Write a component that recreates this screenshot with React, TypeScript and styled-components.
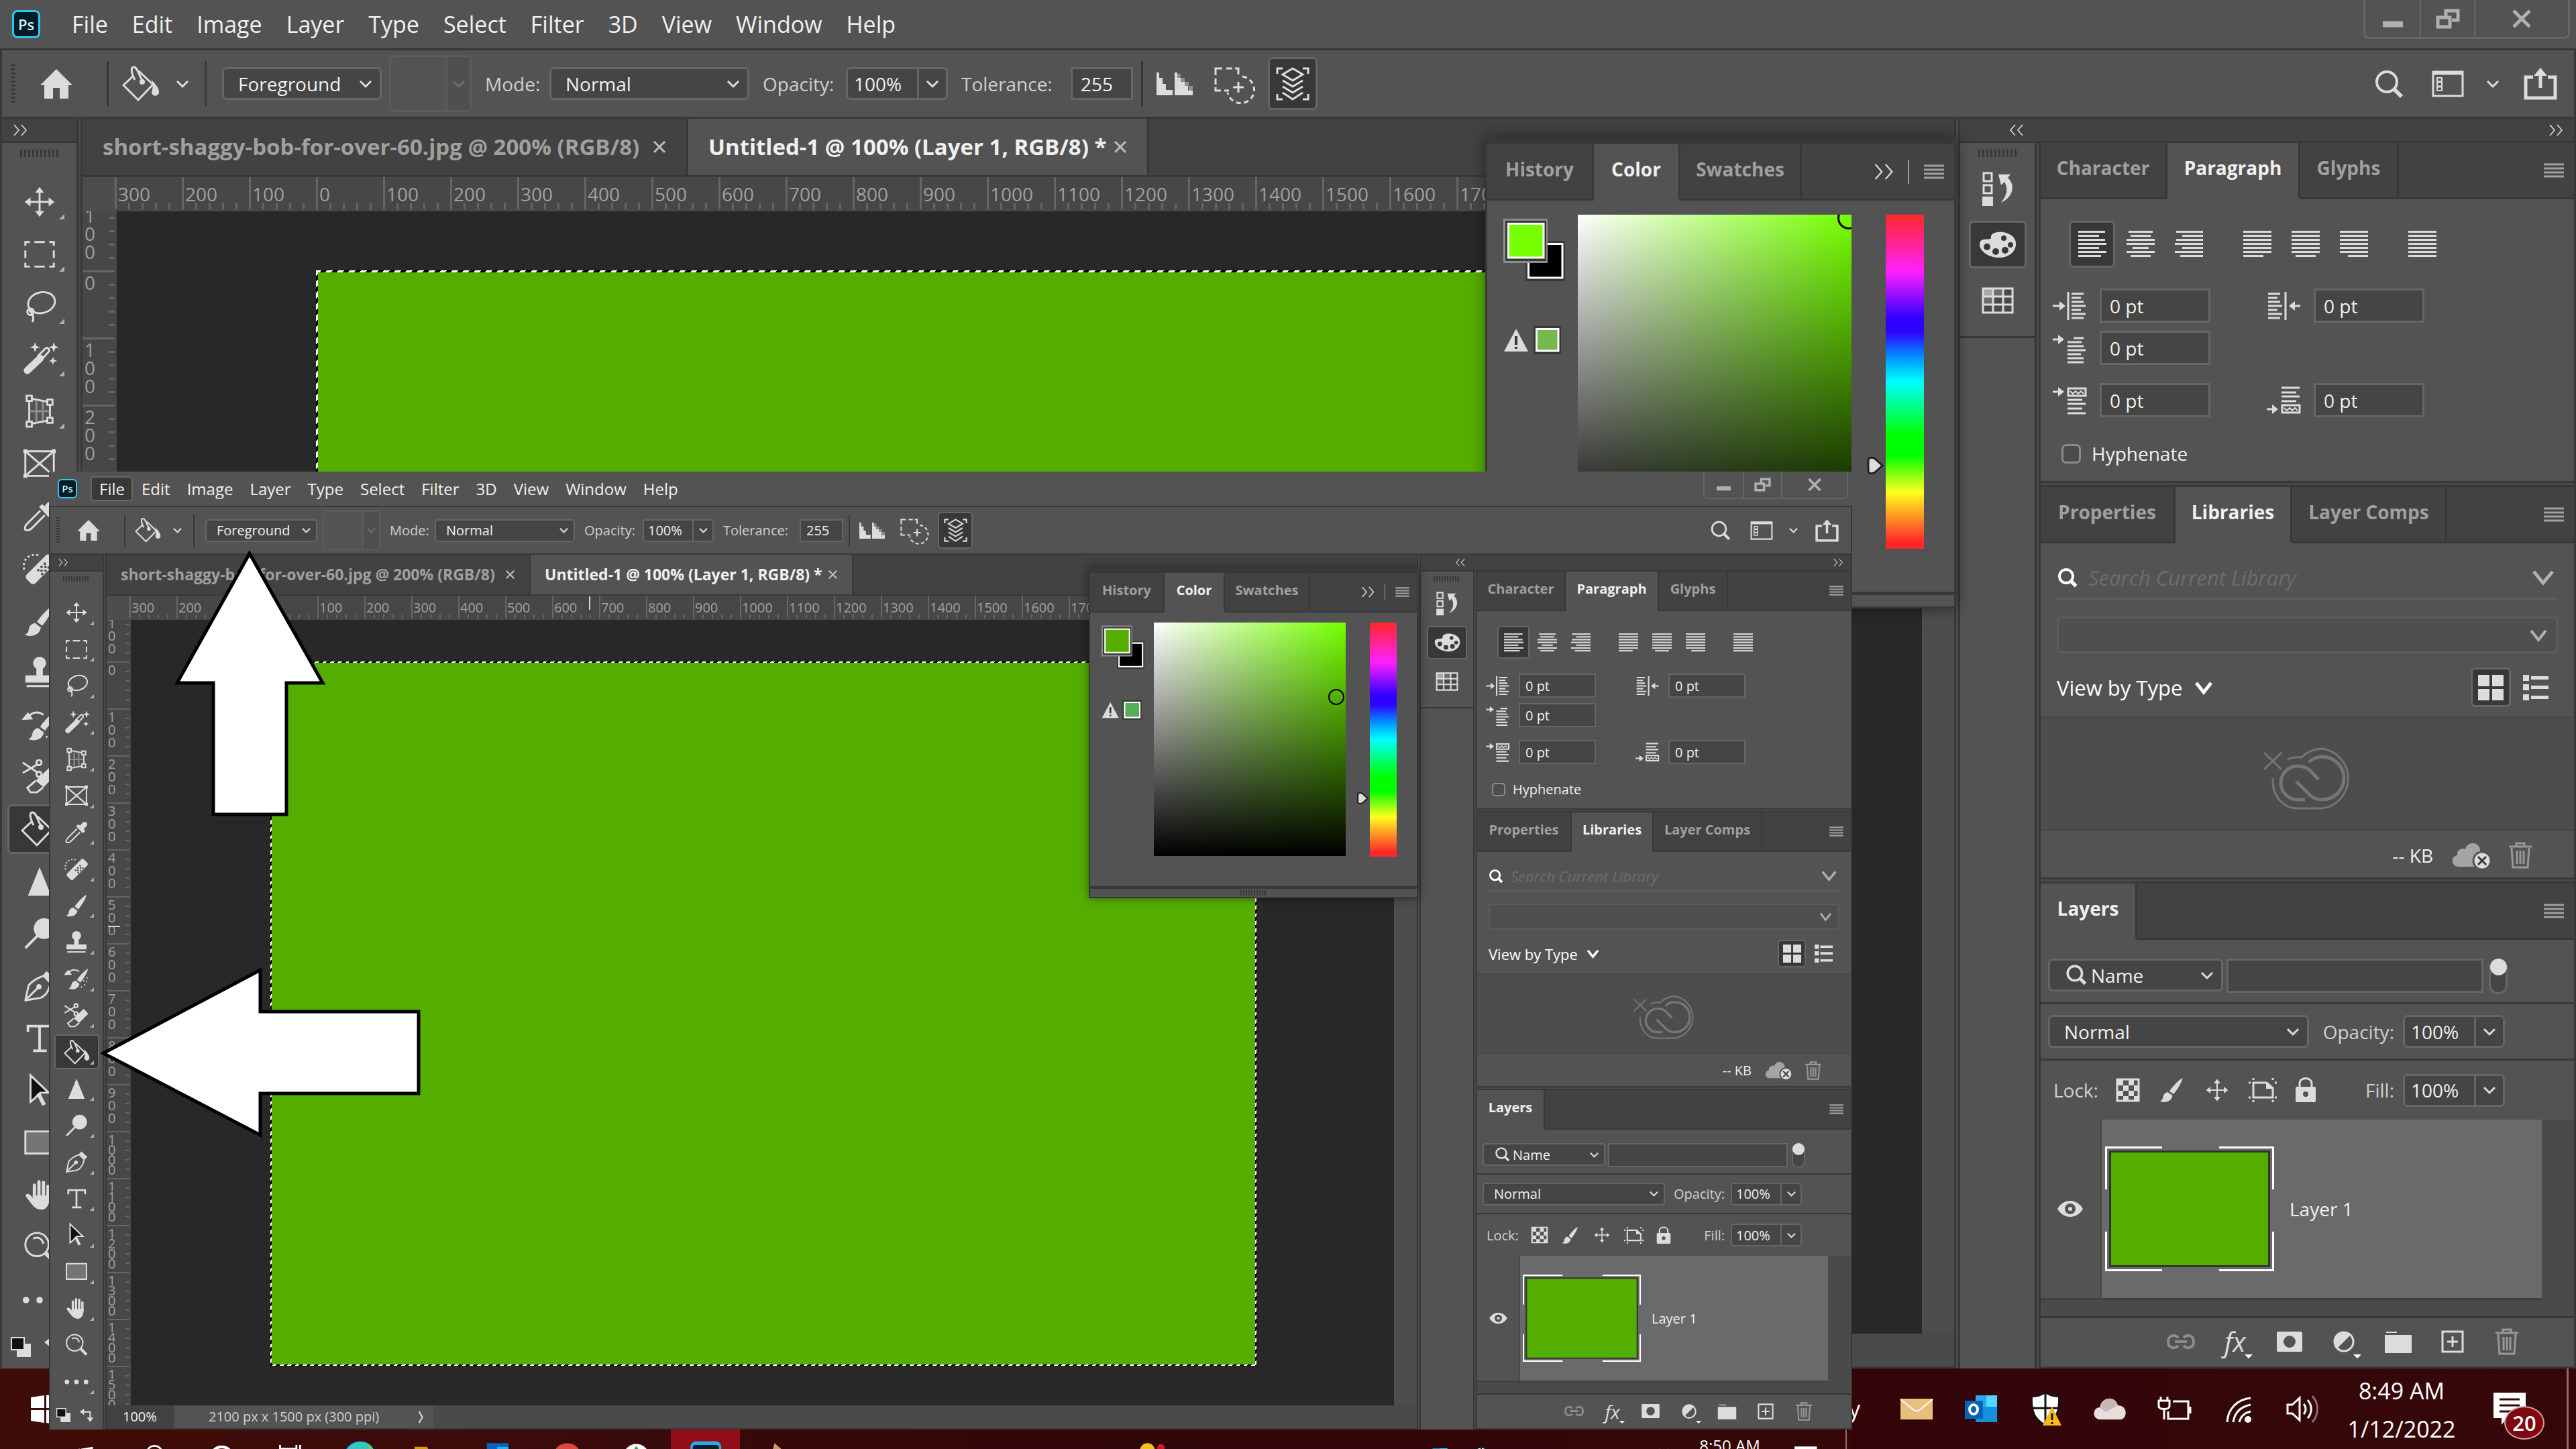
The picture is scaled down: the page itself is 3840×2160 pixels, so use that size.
import React from 'react';
import styled, { createGlobalStyle, css, DefaultTheme, ThemeProvider } from 'styled-components';

declare module 'styled-components' {
  export interface DefaultTheme {
    scale: number;
  }
}

type Themed = { theme: DefaultTheme };

/* Every length is written at 100% and follows the scale of its desktop; hairlines never vanish. */
const toPx = (n: number, p: Themed) => {
  const v = Math.round(n * p.theme.scale);
  return `${n > 0 ? Math.max(1, v) : v}px`;
};
const u = (n: number) => (p: Themed) => toPx(n, p);

const c = {
  panel: '#535353',
  header: '#424242',
  field: '#454545',
  line: '#383838',
  edge: '#666666',
  strip: '#4a4a4a',
  canvas: '#282828',
  icon: '#dcdcdc',
  dim: '#a0a0a0',
  text: '#f0f0f0',
  label: '#cfcfcf',
  green: '#54ae00',
};

const Global = createGlobalStyle`
  *, *::before, *::after { box-sizing: border-box; }
  html, body { margin: 0; padding: 0; background: #350709; }
  body, button, input, select { font-family: "Open Sans", "Noto Sans", sans-serif; }
  button, input, select { margin: 0; padding: 0; border: 0; border-radius: 0; outline: 0; background: none; color: inherit; }
`;

/* ---------- drawings ---------- */

const Svg = styled.svg<{ $w: number; $h: number }>`
  display: block;
  flex: none;
  width: ${p => toPx(p.$w, p)};
  height: ${p => toPx(p.$h, p)};
  overflow: visible;
`;

type DrawingProps = { w: number; h: number; vw?: number; vh?: number; children: React.ReactNode };
const Drawing = ({ w, h, vw = w, vh = h, children }: DrawingProps) => (
  <Svg $w={w} $h={h} viewBox={`0 0 ${vw} ${vh}`} fill="none" aria-hidden="true">
    {children}
  </Svg>
);

const Chevron = ({ w = 18, h = 10, color = c.icon, weight = 3 }: { w?: number; h?: number; color?: string; weight?: number }) => (
  <Drawing w={w} h={h}>
    <path d={`M1 1 L${w / 2} ${h - 1} L${w - 1} 1`} stroke={color} strokeWidth={weight} />
  </Drawing>
);

const DoubleChevron = ({ w = 20, h = 16, left = false }: { w?: number; h?: number; left?: boolean }) => (
  <Drawing w={w} h={h} vw={20} vh={16}>
    <path
      d={left ? 'M8 0 L1 8 L8 16 M19 0 L12 8 L19 16' : 'M1 0 L8 8 L1 16 M12 0 L19 8 L12 16'}
      stroke={c.icon}
      strokeWidth="1.6"
    />
  </Drawing>
);

const Burger = () => (
  <Drawing w={30} h={22}>
    <path d="M0 2 H30 M0 8 H30 M0 14 H30 M0 20 H30" stroke={c.dim} strokeWidth="3" />
  </Drawing>
);

const Bucket = ({ size = 56 }: { size?: number }) => (
  <Drawing w={size} h={size} vw={56} vh={56}>
    <path d="M17 16 L2 30 L24 52 L46 29 L25 9" stroke={c.icon} strokeWidth="3" strokeLinejoin="round" />
    <path d="M19 22 C13 10 13 4 17 3 C22 2 24 12 30 23" stroke={c.icon} strokeWidth="3" />
    <circle cx="30" cy="25" r="4" fill={c.icon} />
    <path d="M43 21 C48 26 56 35 55 41 C54 48 44 47 44 40 C46 34 47 28 43 21 Z" fill={c.icon} />
  </Drawing>
);

const Magnifier = ({ size, color = c.icon, weight = 4 }: { size: number; color?: string; weight?: number }) => (
  <Drawing w={size} h={size} vw={42} vh={42}>
    <circle cx="18" cy="18" r="15" stroke={color} strokeWidth={weight} />
    <path d="M28 28 L40 40" stroke={color} strokeWidth={weight + 2} />
  </Drawing>
);

const BrushShape = () => (
  <>
    <path d="M50 4 C42 8 30 21 24 30 L32 36 C39 28 48 14 50 4 Z" fill={c.icon} />
    <path d="M21 32 C14 33 12 38 11 43 C10 48 7 49 5 50 C13 54 28 52 30 39 Z" fill={c.icon} />
  </>
);

const I = c.icon;
const tools: Record<string, React.ReactNode> = {
  move: (
    <>
      <path d="M28 10 V46 M10 28 H46" stroke={I} strokeWidth="3" />
      <path d="M28 5 l7 9 h-14 z M28 51 l7 -9 h-14 z M5 28 l9 -7 v14 z M51 28 l-9 -7 v14 z" fill={I} />
    </>
  ),
  marquee: (
    <path
      d="M6 15 V9 H13 M20 9 H36 M43 9 H50 V15 M50 22 V34 M50 41 V47 H43 M36 47 H20 M13 47 H6 V41 M6 34 V22"
      stroke={I}
      strokeWidth="3"
    />
  ),
  lasso: (
    <>
      <ellipse cx="31" cy="22" rx="21" ry="16" transform="rotate(-14 31 22)" stroke={I} strokeWidth="3" />
      <circle cx="14" cy="36" r="5" stroke={I} strokeWidth="3" />
      <path d="M11 33 C17 38 20 45 17 52" stroke={I} strokeWidth="3" />
    </>
  ),
  wand: (
    <>
      <path d="M9 46 L29 27" stroke={I} strokeWidth="11" strokeLinecap="round" />
      <path d="M25 24 L37 12 C40 9 45 14 42 17 L31 29" stroke={I} strokeWidth="3" />
      <path d="M21 2 l2 6 6 2 -6 2 -2 6 -2 -6 -6 -2 6 -2 z M50 2 l2 6 6 2 -6 2 -2 6 -2 -6 -6 -2 6 -2 z M49 25 l1 4 5 2 -5 2 -1 4 -2 -4 -4 -2 4 -2 z" fill={I} />
    </>
  ),
  warp: (
    <>
      <path d="M12 8 L44 14 V42 L12 48 Z" stroke={I} strokeWidth="3" />
      <path d="M23 11 V45 M33 13 V43 M13 28 H43" stroke="#8e8e8e" strokeWidth="3" />
      <path d="M8 4 h8 v8 h-8 z M40 10 h8 v8 h-8 z M40 38 h8 v8 h-8 z M8 44 h8 v8 h-8 z" fill={c.panel} stroke={I} strokeWidth="3" />
    </>
  ),
  frame: (
    <>
      <path d="M6 9 H50 V47 H6 Z M6 9 L50 47 M50 9 L6 47" stroke={I} strokeWidth="3" />
      <path d="M3 6 h6 v6 h-6 z M47 6 h6 v6 h-6 z M47 44 h6 v6 h-6 z M3 44 h6 v6 h-6 z" fill={I} />
    </>
  ),
  dropper: (
    <>
      <path d="M29 20 L9 40 C4 45 4 51 9 50 C12 51 15 48 17 46 L36 27" stroke={I} strokeWidth="3" />
      <path d="M27 14 L32 10 L36 13 C40 6 46 3 50 6 C54 10 50 16 44 20 L47 25 L42 30 Z" fill={I} />
    </>
  ),
  heal: (
    <>
      <rect x="4" y="20" width="52" height="19" rx="5" transform="rotate(-45 30 30)" fill={I} />
      <path d="M26 31 h.1 M32 37 h.1 M31 26 h.1 M37 32 h.1 M36 21 h.1 M42 27 h.1 M31 32 h.1 M37 26 h.1" stroke={c.panel} strokeWidth="4" strokeLinecap="round" />
      <path d="M4 30 C1 14 12 5 26 8" stroke={I} strokeWidth="3" strokeDasharray="3 4" />
    </>
  ),
  brush: <BrushShape />,
  stamp: (
    <>
      <circle cx="28" cy="13" r="10" fill={I} />
      <path d="M23 20 H33 V32 H23 Z M6 32 H50 V43 H6 Z M8 47 H48 V50 H8 Z" fill={I} />
    </>
  ),
  history: (
    <>
      <g transform="translate(6 2) scale(.95)">
        <BrushShape />
      </g>
      <path d="M34 12 C26 6 16 8 12 14" stroke={I} strokeWidth="3" />
      <path d="M0 20 L10 8 L18 19 Z" fill={I} />
      <path d="M52 26 v.1 M50 34 v.1 M46 41 v.1 M39 46 v.1 M44 32 v.1" stroke={I} strokeWidth="3" strokeLinecap="round" />
    </>
  ),
  eraser: (
    <>
      <path d="M22 34 L44 13 L54 24 L34 44 Z" fill={I} />
      <path d="M22 34 L9 45 L14 52 H24 L34 44" stroke={I} strokeWidth="3" />
      <path d="M2 6 L26 22 M2 22 L26 8" stroke={I} strokeWidth="3" />
      <circle cx="27" cy="6" r="4" stroke={I} strokeWidth="3" />
      <circle cx="27" cy="24" r="4" stroke={I} strokeWidth="3" />
    </>
  ),
  triangle: <path d="M28 6 L46 50 H10 Z" fill={I} />,
  dodge: (
    <>
      <circle cx="35" cy="20" r="16" fill={I} />
      <path d="M26 30 L6 50" stroke={I} strokeWidth="4" />
    </>
  ),
  pen: (
    <>
      <path d="M6 50 L11 27 C16 20 26 15 34 12 L45 23 C43 32 40 41 30 46 Z" stroke={I} strokeWidth="3" strokeLinejoin="round" />
      <path d="M8 48 L25 31" stroke={I} strokeWidth="3" />
      <circle cx="27" cy="29" r="4" fill={I} />
      <path d="M34 10 L39 5 L52 17 L46 23 Z" fill={I} />
    </>
  ),
  type: <path d="M10 18 V9 H47 V18 M28 9 V47 M18 47 H39" stroke={I} strokeWidth="4" />,
  pointer: (
    <>
      <path d="M14 4 L42 31 H29 L20 40 L14 45 Z" fill="#111" stroke={I} strokeWidth="3" />
      <path d="M26 32 L35 50" stroke={I} strokeWidth="6" />
    </>
  ),
  rect: <path d="M6 10 H50 V44 H6 Z" fill="#757575" stroke={I} strokeWidth="3" />,
  hand: (
    <>
      <path d="M20 12 V30 M27 7 V30 M34 8 V30 M41 14 V32" stroke={I} strokeWidth="5" strokeLinecap="round" />
      <path d="M17 28 H44 C44 40 40 50 31 50 C20 50 15 40 7 30 C5 26 10 24 13 27 L18 32 Z" fill={I} />
    </>
  ),
  zoom: (
    <>
      <circle cx="24" cy="23" r="18" stroke={I} strokeWidth="3" />
      <path d="M18 14 C26 10 32 14 34 22" stroke={I} strokeWidth="3" />
      <path d="M37 36 L50 49" stroke={I} strokeWidth="6" />
    </>
  ),
  more: (
    <>
      <circle cx="7" cy="28" r="5" fill={I} />
      <circle cx="28" cy="28" r="5" fill={I} />
      <circle cx="49" cy="28" r="5" fill={I} />
    </>
  ),
};
const toolOrder = [
  'move', 'marquee', 'lasso', 'wand', 'warp', 'frame', 'dropper', 'heal', 'brush', 'stamp', 'history',
  'eraser', 'bucket', 'triangle', 'dodge', 'pen', 'type', 'pointer', 'rect', 'hand', 'zoom', 'more',
];

const Trash = () => (
  <Drawing w={34} h={40}>
    <path d="M11 6 V2 H23 V6 M0 7 H34 M4 9 L6 38 H28 L30 9 M12 13 V33 M17 13 V33 M22 13 V33" stroke="#989898" strokeWidth="3" />
  </Drawing>
);

type Anchor = 'left' | 'center' | 'right';
const AlignIcon = ({ lens, anchor }: { lens: number[]; anchor: Anchor }) => (
  <Drawing w={42} h={40}>
    {lens.map((len, i) => {
      const x = anchor === 'left' ? 0 : anchor === 'right' ? 42 - len : (42 - len) / 2;
      return <rect key={i} x={x} y={i * 6} width={len} height="3" fill={c.icon} />;
    })}
  </Drawing>
);

const indentLines = 'M28 3 H46 M28 9 H42 M28 15 H46 M28 21 H49 M28 27 H42 M28 33 H49 M28 39 H46';
const indents: Record<string, React.ReactNode> = {
  'Indent left margin': (
    <>
      <path d={indentLines} stroke={I} strokeWidth="3" />
      <path d="M23 0 V42 M0 21 H12" stroke={I} strokeWidth="3" />
      <path d="M10 14 L19 21 L10 28 Z" fill={I} />
    </>
  ),
  'Indent right margin': (
    <>
      <g transform="translate(-26 0)">
        <path d={indentLines} stroke={I} strokeWidth="3" />
      </g>
      <path d="M28 0 V42 M40 21 H50" stroke={I} strokeWidth="3" />
      <path d="M42 14 L33 21 L42 28 Z" fill={I} />
    </>
  ),
  'Indent first line': (
    <>
      <path d="M31 6 H46 M22 12 H43 M22 18 H46 M22 24 H49 M22 30 H42 M22 36 H46 M22 42 H46" stroke={I} strokeWidth="3" />
      <path d="M0 8 H10" stroke={I} strokeWidth="3" />
      <path d="M8 1 L17 8 L8 15 Z" fill={I} />
    </>
  ),
  'Space before paragraph': (
    <>
      <path d="M23 3 H49 V14 H23 Z M22 20 H44 M22 26 H49 M22 33 H44 M22 40 H49" stroke={I} strokeWidth="3" />
      <path d="M26 7 l4 4 4 -4 4 4 4 -4 4 4" stroke={I} strokeWidth="2" />
      <path d="M0 8 H10" stroke={I} strokeWidth="3" />
      <path d="M8 1 L17 8 L8 15 Z" fill={I} />
    </>
  ),
  'Space after paragraph': (
    <>
      <path d="M23 28 H49 V39 H23 Z M22 2 H49 M22 9 H44 M22 15 H49 M22 22 H44" stroke={I} strokeWidth="3" />
      <path d="M26 32 l4 4 4 -4 4 4 4 -4 4 4" stroke={I} strokeWidth="2" />
      <path d="M0 34 H10" stroke={I} strokeWidth="3" />
      <path d="M8 27 L17 34 L8 41 Z" fill={I} />
    </>
  ),
};

/* ---------- shared controls ---------- */

const IconButton = styled.button<{ $w: number; $h: number; $active?: boolean }>`
  display: flex;
  flex: none;
  align-items: center;
  justify-content: center;
  width: ${p => toPx(p.$w, p)};
  height: ${p => toPx(p.$h, p)};
  border: ${u(3)} solid transparent;
  border-radius: ${u(7)};
  ${p => p.$active && css`
    background: ${c.line};
    border-color: ${c.edge};
  `}
`;

const SelectBox = styled.div<{ $w?: number; $h?: number; $tail?: number; $faint?: boolean }>`
  position: relative;
  display: flex;
  flex: none;
  align-items: center;
  justify-content: flex-end;
  width: ${p => (p.$w ? toPx(p.$w, p) : 'auto')};
  height: ${p => toPx(p.$h ?? 49, p)};
  padding-right: ${p => toPx(p.$tail ?? 12, p)};
  border: ${u(3)} solid ${p => (p.$faint ? '#5c5c5c' : c.edge)};
  border-radius: ${u(7)};
  background: ${p => (p.$faint ? '#4f4f4f' : c.field)};
`;

const NativeSelect = styled.select<{ $pad: number }>`
  position: absolute;
  inset: 0;
  width: 100%;
  appearance: none;
  padding-left: ${p => toPx(p.$pad, p)};
  color: ${c.text};
  font-size: ${u(28)};
`;

const Lens = styled.span`
  position: absolute;
  left: ${u(24)};
  top: ${u(6)};
`;

type PickProps = { label: string; value: string; w?: number; pad?: number; lens?: boolean };
const Pick = ({ label, value, w, pad = 21, lens }: PickProps) => (
  <SelectBox $w={w}>
    <NativeSelect $pad={pad} aria-label={label} defaultValue={value}>
      <option>{value}</option>
    </NativeSelect>
    {lens && (
      <Lens>
        <Magnifier size={30} weight={5} />
      </Lens>
    )}
    <Chevron />
  </SelectBox>
);

const ComboBox = styled.div<{ $w: number; $h?: number; $faint?: boolean }>`
  display: flex;
  flex: none;
  width: ${p => toPx(p.$w, p)};
  height: ${p => toPx(p.$h ?? 49, p)};
  border: ${u(3)} solid ${p => (p.$faint ? '#5c5c5c' : c.edge)};
  border-radius: ${u(7)};
  background: ${p => (p.$faint ? 'transparent' : c.field)};
`;

const ComboInput = styled.input`
  flex: 1;
  min-width: 0;
  padding-left: ${u(9)};
  color: ${c.text};
  font-size: ${u(28)};
`;

const ComboArrow = styled.button<{ $w?: number; $faint?: boolean }>`
  display: flex;
  align-items: center;
  justify-content: center;
  width: ${p => toPx(p.$w ?? 43, p)};
  border-left: ${u(3)} solid ${p => (p.$faint ? '#5c5c5c' : c.edge)};
  background: ${p => (p.$faint ? '#4f4f4f' : 'none')};
`;

const Combo = ({ id, value }: { id: string; value: string }) => (
  <ComboBox $w={152}>
    <ComboInput id={id} defaultValue={value} />
    <ComboArrow aria-label="Open slider">
      <Chevron />
    </ComboArrow>
  </ComboBox>
);

const TextBox = styled.input<{ $w: number; $h?: number }>`
  flex: none;
  width: ${p => toPx(p.$w, p)};
  height: ${p => toPx(p.$h ?? 51, p)};
  padding-left: ${u(12)};
  border: ${u(3)} solid ${c.edge};
  background: ${c.field};
  color: ${c.text};
  font-size: ${u(28)};
`;

const Grip = styled.div`
  flex: none;
  width: ${u(57)};
  height: ${u(11)};
  background: repeating-linear-gradient(90deg, ${c.line} 0 ${u(3)}, transparent ${u(3)} ${u(6)});
`;

const Ridge = styled.div`
  flex: none;
  width: ${u(9)};
  border: solid ${c.line};
  border-width: 0 ${u(3)};
  background: ${c.strip};
`;

/* ---------- title bar ---------- */

const TitleBar = styled.header`
  display: flex;
  flex: none;
  align-items: center;
  height: ${u(75)};
  padding-left: ${u(18)};
  border-bottom: ${u(3)} solid ${c.line};
`;

const AppMark = styled.div`
  display: flex;
  align-items: center;
  justify-content: center;
  width: ${u(42)};
  height: ${u(42)};
  margin-right: ${u(28)};
  border: ${u(3)} solid #31c5f4;
  border-radius: ${u(8)};
  background: #001d26;
  color: #c9f0ff;
  font-size: ${u(22)};
  font-weight: 600;
  line-height: 1;
`;

const MenuItem = styled.button<{ $active: boolean }>`
  height: ${u(53)};
  padding: 0 ${u(14)} 0 ${u(16)};
  border: ${u(3)} solid ${p => (p.$active ? c.edge : 'transparent')};
  border-radius: ${u(7)};
  background: ${p => (p.$active ? c.line : 'none')};
  color: ${c.text};
  font-size: ${u(34)};
  line-height: ${u(44)};
`;

const WindowButtons = styled.div`
  display: flex;
  align-self: flex-start;
  height: ${u(58)};
  margin: 0 ${u(9)} 0 auto;
  border: ${u(3)} solid ${c.edge};
  border-top: 0;
  border-radius: 0 0 ${u(8)} ${u(8)};
`;

const WindowButton = styled.button<{ $w: number }>`
  display: flex;
  align-items: center;
  justify-content: center;
  width: ${p => toPx(p.$w, p)};
  & + & {
    border-left: ${u(3)} solid ${c.edge};
  }
`;

const menus = ['File', 'Edit', 'Image', 'Layer', 'Type', 'Select', 'Filter', '3D', 'View', 'Window', 'Help'];

const Title = ({ openMenu }: { openMenu?: string }) => (
  <TitleBar>
    <AppMark>Ps</AppMark>
    {menus.map(name => (
      <MenuItem key={name} $active={name === openMenu}>
        {name}
      </MenuItem>
    ))}
    <WindowButtons>
      <WindowButton $w={81} aria-label="Minimize">
        <Drawing w={30} h={30}>
          <path d="M0 23 H30" stroke="#b0b0b0" strokeWidth="9" />
        </Drawing>
      </WindowButton>
      <WindowButton $w={81} aria-label="Restore">
        <Drawing w={36} h={30}>
          <path d="M15 13 V3 H33 V17 H24" stroke="#b0b0b0" strokeWidth="5" />
          <path d="M3 13 H21 V27 H3 Z" stroke="#b0b0b0" strokeWidth="5" />
        </Drawing>
      </WindowButton>
      <WindowButton $w={140} aria-label="Close">
        <Drawing w={28} h={24}>
          <path d="M2 0 L26 24 M26 0 L2 24" stroke="#b0b0b0" strokeWidth="5" />
        </Drawing>
      </WindowButton>
    </WindowButtons>
  </TitleBar>
);

/* ---------- options bar ---------- */

const OptionsBar = styled.div`
  display: flex;
  flex: none;
  align-items: center;
  height: ${u(102)};
  border: ${u(3)} solid ${c.line};
  border-top: 0;
`;

const BarGrip = styled.div`
  width: ${u(7)};
  height: ${u(57)};
  margin: 0 ${u(37)} 0 ${u(13)};
  background: repeating-linear-gradient(${c.line} 0 ${u(3)}, transparent ${u(3)} ${u(6)});
`;

const Rule = styled.div`
  width: ${u(3)};
  height: ${u(68)};
  background: ${c.line};
`;

const Cluster = styled.div<{ $gap: number; $l?: number; $r?: number }>`
  display: flex;
  align-items: center;
  gap: ${p => toPx(p.$gap, p)};
  padding: 0 ${p => toPx(p.$r ?? 0, p)} 0 ${p => toPx(p.$l ?? 0, p)};
`;

const OptionPair = styled.div`
  display: flex;
  align-items: center;
`;

const OptionLabel = styled.label<{ $w: number }>`
  width: ${p => toPx(p.$w, p)};
  color: ${c.label};
  font-size: ${u(28)};
  line-height: ${u(36)};
`;

const BarEnd = styled.div`
  display: flex;
  align-items: center;
  gap: ${u(37)};
  margin: 0 ${u(25)} 0 auto;
`;

const Options = ({ uid }: { uid: string }) => (
  <OptionsBar>
    <BarGrip />
    <Cluster $gap={0} $r={51}>
      <Drawing w={48} h={44}>
        <path d="M24 0 L48 24 H42 V44 H29 V28 H19 V44 H6 V24 H0 Z" fill={I} />
      </Drawing>
    </Cluster>
    <Rule />
    <Cluster $gap={25} $l={20} $r={24}>
      <Bucket />
      <Chevron />
    </Cluster>
    <Rule />
    <Cluster $gap={20} $l={23} $r={12}>
      <Cluster $gap={11}>
        <Pick label="Fill source" value="Foreground" w={238} />
        <ComboBox $w={123} $h={85} $faint>
          <ComboInput aria-label="Pattern" disabled />
          <ComboArrow aria-label="Choose pattern" $w={36} $faint disabled>
            <Chevron color="#6c6c6c" />
          </ComboArrow>
        </ComboBox>
      </Cluster>
      <OptionPair>
        <OptionLabel $w={96}>Mode:</OptionLabel>
        <Pick label="Mode" value="Normal" w={298} />
      </OptionPair>
      <OptionPair>
        <OptionLabel $w={124} htmlFor={`${uid}-opacity`}>Opacity:</OptionLabel>
        <Combo id={`${uid}-opacity`} value="100%" />
      </OptionPair>
      <OptionPair>
        <OptionLabel $w={163} htmlFor={`${uid}-tolerance`}>Tolerance:</OptionLabel>
        <TextBox id={`${uid}-tolerance`} $w={93} $h={49} defaultValue="255" />
      </OptionPair>
    </Cluster>
    <Rule />
    <Cluster $gap={24} $l={20}>
      <Drawing w={54} h={34}>
        <path d="M0 0 H4 V8 H9 V17 H14 V26 H24 V34 H0 Z" fill={I} />
        <path d="M27 0 H31 V8 H36 V14 H42 V20 H47 V27 H54 V34 H27 Z" fill={I} />
        <path d="M31 2 h5 v6 h-5 z M36 8 h6 v6 h-6 z M42 14 h6 v6 h-6 z M48 20 h6 v7 h-6 z" fill="#8f8f8f" />
      </Drawing>
      <Cluster $gap={0} $l={8}>
        <Drawing w={56} h={50}>
          <path d="M12 2 H2 V12 M18 2 H27 M31 2 H36 V11 M2 17 V26 M2 30 V35 H10 M15 35 H22 M36 22 V38 M28 30 H44" stroke={I} strokeWidth="3" />
          <path d="M42 14 A20 20 0 1 1 20 38" stroke={I} strokeWidth="3" strokeDasharray="7 5" />
        </Drawing>
      </Cluster>
      <IconButton $w={74} $h={79} $active aria-label="All layers">
        <Drawing w={50} h={50}>
          <path d="M10 2 H2 V10 M40 2 H48 V10 M2 40 V48 H10 M48 40 V48 H40" stroke={I} strokeWidth="3" />
          <path d="M25 2 L40 11 L25 20 L10 11 Z M10 20 L25 29 L40 20 M10 29 L25 38 L40 29 M10 38 L25 48 L40 38" stroke={I} strokeWidth="3" />
        </Drawing>
      </IconButton>
    </Cluster>
    <BarEnd>
      <Magnifier size={42} />
      <Cluster $gap={34} $l={6}>
        <Drawing w={48} h={40}>
          <path d="M2 2 H46 V38 H2 Z M2 5 H46" stroke={I} strokeWidth="3" />
          <path d="M8 11 H15 V30 H8 Z" stroke={I} strokeWidth="2" />
          <path d="M9 17 H14 M9 24 H14" stroke={I} strokeWidth="3" />
        </Drawing>
        <Chevron />
      </Cluster>
      <Drawing w={50} h={48}>
        <path d="M14 14 H3 V45 H47 V14 H36" stroke={I} strokeWidth="5" />
        <path d="M25 8 V30" stroke={I} strokeWidth="5" />
        <path d="M25 0 L35 12 H15 Z" fill={I} />
      </Drawing>
    </BarEnd>
  </OptionsBar>
);

/* ---------- left toolbar ---------- */

const ToolColumn = styled.aside`
  display: flex;
  flex: none;
  flex-direction: column;
  width: ${u(114)};
  border-left: ${u(3)} solid ${c.line};
`;

const DockHeader = styled.div`
  display: flex;
  flex: none;
  align-items: center;
  justify-content: space-between;
  height: ${u(36)};
  padding: 0 ${u(17)};
  border-bottom: ${u(3)} solid ${c.line};
  background: ${c.header};
`;

const GripRow = styled.div`
  display: flex;
  flex: none;
  justify-content: center;
  height: ${u(49)};
  padding-top: ${u(10)};
`;

const ToolCell = styled.div`
  position: relative;
  display: flex;
  flex: 1;
  align-items: center;
  justify-content: center;
  min-height: 0;
`;

const Corner = styled.span`
  position: absolute;
  right: ${u(18)};
  bottom: ${u(13)};
  border-left: ${u(8)} solid transparent;
  border-bottom: ${u(8)} solid #b0b0b0;
`;

const SwatchRow = styled.div`
  display: flex;
  flex: none;
  align-items: center;
  gap: ${u(20)};
  height: ${u(63)};
  padding-left: ${u(13)};
`;

const Toolbar = () => (
  <ToolColumn>
    <DockHeader>
      <DoubleChevron />
    </DockHeader>
    <GripRow>
      <Grip />
    </GripRow>
    {toolOrder.map(name => (
      <ToolCell key={name}>
        <IconButton $w={96} $h={74} $active={name === 'bucket'} aria-label={name}>
          {name === 'bucket' ? (
            <Bucket />
          ) : (
            <Drawing w={54} h={54} vw={56} vh={56}>
              {tools[name]}
            </Drawing>
          )}
        </IconButton>
        {name !== 'zoom' && <Corner />}
      </ToolCell>
    ))}
    <SwatchRow>
      <Drawing w={30} h={30}>
        <path d="M9 10 H30 V30 H9 Z" fill={I} />
        <path d="M1 1 H20 V19 H1 Z" fill="#111" stroke={I} strokeWidth="2" />
      </Drawing>
      <Drawing w={30} h={30}>
        <path d="M7 8 H22 V22" stroke={I} strokeWidth="3" />
        <path d="M0 8 L9 1 V15 Z M22 30 L15 20 H29 Z" fill={I} />
      </Drawing>
    </SwatchRow>
  </ToolColumn>
);

/* ---------- document ---------- */

const DocumentColumn = styled.main`
  position: relative;
  display: flex;
  flex: 1;
  flex-direction: column;
  min-width: 0;
`;

const DocTabs = styled.div`
  display: flex;
  flex: none;
  height: ${u(87)};
  background: ${c.header};
  border-bottom: ${u(3)} solid ${c.line};
`;

const DocTab = styled.div<{ $w: number; $active?: boolean }>`
  display: flex;
  flex: none;
  align-items: center;
  justify-content: space-between;
  width: ${p => toPx(p.$w, p)};
  padding: 0 ${u(31)} 0 ${u(30)};
  border-right: ${u(3)} solid ${c.line};
  background: ${p => (p.$active ? c.panel : 'none')};
  color: ${p => (p.$active ? c.text : c.dim)};
  font-size: ${u(33)};
  font-weight: 700;
  line-height: ${u(44)};
  white-space: nowrap;
`;

const CloseTab = styled.button`
  display: flex;
`;

const DocTabItem = ({ title, w, active }: { title: string; w: number; active?: boolean }) => (
  <DocTab $w={w} $active={active}>
    {title}
    <CloseTab aria-label={`Close ${title}`}>
      <Drawing w={18} h={18}>
        <path d="M1 1 L17 17 M17 1 L1 17" stroke="#bdbdbd" strokeWidth="3" />
      </Drawing>
    </CloseTab>
  </DocTab>
);

const RulerRow = styled.div`
  position: relative;
  display: flex;
  flex: none;
  height: ${u(51)};
  overflow: hidden;
  background: #474747;
`;

const RulerCorner = styled.div`
  flex: none;
  width: ${u(48)};
  background: #4d4d4d;
`;

const HSegment = styled.div`
  flex: none;
  width: ${u(100)};
  height: ${u(48)};
  padding: ${u(8)} 0 0 ${u(2)};
  border-left: ${u(3)} solid ${c.edge};
  background: repeating-linear-gradient(90deg, ${c.edge} 0 ${u(3)}, transparent ${u(3)} ${u(20)}) 0 100% / 100% ${u(9)} no-repeat border-box;
  color: ${c.dim};
  font-size: ${u(28)};
  line-height: ${u(34)};
`;

const VRuler = styled.div`
  position: relative;
  flex: none;
  width: ${u(51)};
  overflow: hidden;
  background: #474747;
`;

const VStack = styled.div`
  margin-top: ${u(-12)};
`;

const VSegment = styled.div<{ $tight: boolean }>`
  height: ${u(100)};
  margin-right: ${u(3)};
  padding: ${p => toPx(p.$tight ? 4 : 2, p)} 0 0 ${u(3)};
  border-top: ${u(3)} solid ${c.edge};
  background: repeating-linear-gradient(${c.edge} 0 ${u(3)}, transparent ${u(3)} ${u(20)}) 100% 0 / ${u(9)} 100% no-repeat border-box;
  color: ${c.dim};
  font-size: ${u(28)};
  line-height: ${p => toPx(p.$tight ? 21 : 27, p)};
`;

const VDigits = styled.div`
  width: ${u(20)};
  word-break: break-all;
`;

const HCursor = styled.div`
  position: absolute;
  left: ${u(1027)};
  top: ${u(2)};
  width: ${u(3)};
  height: ${u(28)};
  background: #d8d8d8;
`;

const VCursor = styled.div`
  position: absolute;
  left: ${u(3)};
  top: ${u(651)};
  width: ${u(26)};
  height: ${u(3)};
  background: #d8d8d8;
`;

const DocBody = styled.div`
  display: flex;
  flex: 1;
  min-height: 0;
  overflow: hidden;
`;

const Canvas = styled.div`
  flex: 1;
  min-width: 0;
  overflow: hidden;
  padding: ${u(88)} 0 0 ${u(297)};
  background: ${c.canvas};
`;

const Sheet = styled.div`
  width: ${u(2100)};
  height: ${u(1500)};
  padding: ${u(3)};
  background: repeating-linear-gradient(135deg, #fff 0 ${u(6)}, #000 ${u(6)} ${u(12)});

  &::after {
    content: '';
    display: block;
    height: 100%;
    background: ${c.green};
  }
`;

const ScrollTrack = styled.div`
  flex: none;
  width: ${u(48)};
  background: #4d4d4d;
`;

const StatusBar = styled.div`
  display: flex;
  flex: none;
  height: ${u(52)};
  border-bottom: ${u(3)} solid ${c.line};
  background: ${c.strip};
  color: ${c.label};
  font-size: ${u(28)};
  line-height: ${u(49)};
`;

const ZoomValue = styled.div`
  width: ${u(144)};
  padding-left: ${u(34)};
  background: ${c.header};
  color: ${c.text};
`;

const DocInfo = styled.div`
  display: flex;
  align-items: center;
  justify-content: space-between;
  width: ${u(551)};
  padding: 0 ${u(22)} 0 ${u(73)};
  background: ${c.panel};
`;

const hLabels = [300, 200, 100, ...Array.from({ length: 18 }, (_, i) => i * 100)];

const DocumentArea = (p: DesktopState) => (
  <DocumentColumn>
    <DocTabs>
      <DocTabItem title="short-shaggy-bob-for-over-60.jpg @ 200% (RGB/8)" w={903} />
      <DocTabItem title="Untitled-1 @ 100% (Layer 1, RGB/8) *" w={687} active />
    </DocTabs>
    <RulerRow>
      <RulerCorner />
      {hLabels.map((n, i) => (
        <HSegment key={i}>{n}</HSegment>
      ))}
      {p.cursor && <HCursor />}
    </RulerRow>
    <DocBody>
      <VRuler>
        <VStack>
          {[100, ...Array.from({ length: p.rulerTo }, (_, i) => i * 100)].map((n, i) => (
            <VSegment key={i} $tight={n >= 1000}>
              <VDigits>{n}</VDigits>
            </VSegment>
          ))}
        </VStack>
        {p.cursor && <VCursor />}
      </VRuler>
      <Canvas>
        <Sheet />
      </Canvas>
      <ScrollTrack />
    </DocBody>
    <StatusBar>
      {p.status && (
        <>
          <ZoomValue>100%</ZoomValue>
          <DocInfo>
            2100 px x 1500 px (300 ppi)
            <Drawing w={10} h={24}>
              <path d="M1 0 L8 12 L1 24" stroke={I} strokeWidth="3" />
            </Drawing>
          </DocInfo>
        </>
      )}
    </StatusBar>
    <ColorPanel {...p} />
  </DocumentColumn>
);

/* ---------- panel tabs ---------- */

const TabRow = styled.div`
  display: flex;
  flex: none;
  height: ${u(84)};
  background: ${c.header};
`;

const PanelTab = styled.button<{ $w: number; $active: boolean }>`
  flex: none;
  width: ${p => toPx(p.$w, p)};
  padding-bottom: ${u(8)};
  border-right: ${u(3)} solid ${c.line};
  border-bottom: ${u(3)} solid ${p => (p.$active ? c.panel : c.line)};
  background: ${p => (p.$active ? c.panel : 'none')};
  color: ${p => (p.$active ? c.text : c.dim)};
  font-size: ${u(28)};
  font-weight: 700;
  white-space: nowrap;
`;

const TabTail = styled.div`
  display: flex;
  flex: 1;
  align-items: center;
  justify-content: flex-end;
  gap: ${u(22)};
  padding-right: ${u(15)};
  border-bottom: ${u(3)} solid ${c.line};
`;

const TailRule = styled.div`
  width: ${u(2)};
  height: ${u(36)};
  background: ${c.dim};
`;

type TabsProps = { tabs: [string, number][]; active: string; floating?: boolean };
const Tabs = ({ tabs, active, floating }: TabsProps) => (
  <TabRow>
    {tabs.map(([name, w]) => (
      <PanelTab key={name} $w={w} $active={name === active}>
        {name}
      </PanelTab>
    ))}
    <TabTail>
      {floating && (
        <>
          <DoubleChevron w={28} h={22} />
          <TailRule />
        </>
      )}
      <Burger />
    </TabTail>
  </TabRow>
);

/* ---------- floating colour panel ---------- */

const Floating = styled.section`
  position: absolute;
  top: ${u(27)};
  right: ${u(-3)};
  width: ${u(702)};
  border: ${u(3)} solid ${c.line};
  border-top-width: ${u(11)};
  background: ${c.panel};
  box-shadow: 0 0 ${u(20)} rgba(0, 0, 0, 0.45);
`;

const ColorBody = styled.div`
  display: flex;
  height: ${u(588)};
  padding: ${u(21)} 0 0 ${u(24)};
  border-bottom: ${u(5)} solid ${c.line};
`;

const SwatchColumn = styled.div`
  width: ${u(111)};
  padding-top: ${u(6)};
`;

const FieldBox = styled.div`
  position: relative;
  width: ${u(408)};
  height: ${u(497)};
  overflow: hidden;
  background: linear-gradient(to top, #000, transparent), linear-gradient(to right, #fff, #75ff00);
`;

const PickerRing = styled.div`
  position: absolute;
  width: ${u(34)};
  height: ${u(34)};
  margin: ${u(-17)};
  border: ${u(3)} solid #000;
  border-radius: 50%;
`;

const HueBar = styled.div`
  position: relative;
  width: ${u(57)};
  height: ${u(498)};
  margin-left: ${u(51)};
  background: linear-gradient(#ff2828, #ff20ff 17%, #3000ff 31%, #3000ff 35%, #0098ff 43%, #00ffff 50%, #00ff00 66%, #00ff00 72%, #ffff20 83%, #ff2828 98%);
`;

const HueInput = styled.input`
  position: absolute;
  inset: 0;
  width: 100%;
  height: 100%;
  opacity: 0;
`;

const HuePointer = styled.div`
  position: absolute;
  top: ${u(361)};
  left: ${u(-29)};
`;

const ResizeEdge = styled.div`
  display: flex;
  align-items: center;
  justify-content: center;
  height: ${u(17)};
`;

const ColorPanel = ({ fore, safe, ring }: DesktopState) => (
  <Floating>
    <Tabs tabs={[['History', 159], ['Color', 129], ['Swatches', 181]]} active="Color" floating />
    <ColorBody>
      <SwatchColumn>
        <Drawing w={92} h={204}>
          <path d="M33 33 H92 V93 H33 Z" fill={c.line} />
          <path d="M37.5 37.5 H88 V88 H37.5 Z" fill="#000" stroke="#fff" strokeWidth="3" />
          <path d="M0 0 H66 V66 H0 Z" fill="#8c8c8c" />
          <path d="M3 3 H64 V63 H3 Z" fill={c.line} />
          <path d="M7.5 7.5 H60 V58 H7.5 Z" fill={fore} stroke="#fff" strokeWidth="3" />
          <path d="M19 164 L37 198 H1 Z" fill={I} />
          <path d="M19 175 V188 M19 191 V194" stroke={c.line} strokeWidth="4" />
          <path d="M45 160 H86 V202 H45 Z" fill={c.line} />
          <path d="M49.5 164.5 H82 V197 H49.5 Z" fill={safe} stroke="#fff" strokeWidth="3" />
        </Drawing>
      </SwatchColumn>
      <FieldBox>
        <PickerRing style={{ left: ring[0], top: ring[1] }} />
      </FieldBox>
      <HueBar>
        <HueInput type="range" aria-label="Hue" />
        <HuePointer>
          <Drawing w={26} h={26}>
            <path d="M3 5 C3 1 9 0 13 3 L24 13 L13 23 C9 26 3 25 3 21 Z" fill={I} stroke="#222" strokeWidth="3" />
          </Drawing>
        </HuePointer>
      </HueBar>
    </ColorBody>
    <ResizeEdge>
      <Grip />
    </ResizeEdge>
  </Floating>
);

/* ---------- right dock ---------- */

const Dock = styled.div`
  display: flex;
  flex: none;
  flex-direction: column;
  width: ${u(918)};
  border-right: ${u(3)} solid ${c.line};
`;

const HeadGap = styled.div`
  margin-right: auto;
  margin-left: ${u(57)};
`;

const DockBody = styled.div`
  display: flex;
  flex: 1;
  min-height: 0;
`;

const IconStrip = styled.div`
  width: ${u(111)};
`;

const StripSection = styled.div`
  display: flex;
  flex-direction: column;
  align-items: center;
  gap: ${u(12)};
  height: ${u(291)};
  padding-top: ${u(10)};
  border-bottom: ${u(3)} solid ${c.line};
`;

const Panels = styled.div`
  display: flex;
  flex: 1;
  flex-direction: column;
  border-bottom: ${u(3)} solid ${c.line};
`;

const PanelBreak = styled.div`
  flex: none;
  height: ${u(9)};
  border: solid ${c.line};
  border-width: ${u(3)} 0;
  background: ${c.strip};
`;

/* paragraph */

const ParagraphBody = styled.div`
  flex: none;
  height: ${u(420)};
  padding: ${u(32)} 0 0 ${u(18)};
`;

const AlignRow = styled.div`
  display: flex;
  gap: ${u(33)};
  height: ${u(70)};
  margin: 0 0 ${u(31)} ${u(24)};
`;

const AlignGroup = styled.div`
  display: flex;
  gap: ${u(3)};
`;

const IndentRow = styled.div<{ $space?: boolean }>`
  display: flex;
  gap: ${u(84)};
  margin-bottom: ${p => toPx(p.$space ? 27 : 12, p)};
`;

const IndentPair = styled.label`
  display: flex;
  align-items: center;
  gap: ${u(20)};
`;

const CheckLabel = styled.label`
  display: flex;
  align-items: center;
  gap: ${u(16)};
  margin: ${u(36)} 0 0 ${u(13)};
  color: ${c.text};
  font-size: ${u(28)};
  line-height: ${u(36)};
`;

const CheckBox = styled.input`
  appearance: none;
  width: ${u(29)};
  height: ${u(29)};
  border: ${u(3)} solid #8a8a8a;
  border-radius: ${u(7)};
  background: #4c4c4c;
`;

const ragged = [40, 31, 40, 42, 31, 42, 34];
const centred = [36, 30, 42, 42, 24, 42, 30];
const block = [42, 42, 42, 42, 42, 42, 30];
const full = [42, 42, 42, 42, 42, 42, 42];
const alignGroups: [string, number[], Anchor][][] = [
  [['Left align', ragged, 'left'], ['Center', centred, 'center'], ['Right align', ragged, 'right']],
  [['Justify last left', block, 'left'], ['Justify last centered', block, 'center'], ['Justify last right', block, 'right']],
  [['Justify all', full, 'left']],
];

const Indent = ({ name }: { name: string }) => (
  <IndentPair>
    <Drawing w={50} h={42}>
      {indents[name]}
    </Drawing>
    <TextBox $w={165} aria-label={name} defaultValue="0 pt" />
  </IndentPair>
);

const Paragraph = () => (
  <>
    <Tabs tabs={[['Character', 189], ['Paragraph', 198], ['Glyphs', 147]]} active="Paragraph" />
    <ParagraphBody>
      <AlignRow>
        {alignGroups.map((group, g) => (
          <AlignGroup key={g}>
            {group.map(([name, lens, anchor]) => (
              <IconButton key={name} $w={69} $h={70} $active={name === 'Left align'} aria-label={name}>
                <AlignIcon lens={lens} anchor={anchor} />
              </IconButton>
            ))}
          </AlignGroup>
        ))}
      </AlignRow>
      <IndentRow>
        <Indent name="Indent left margin" />
        <Indent name="Indent right margin" />
      </IndentRow>
      <IndentRow $space>
        <Indent name="Indent first line" />
      </IndentRow>
      <IndentRow>
        <Indent name="Space before paragraph" />
        <Indent name="Space after paragraph" />
      </IndentRow>
      <CheckLabel>
        <CheckBox type="checkbox" />
        Hyphenate
      </CheckLabel>
    </ParagraphBody>
  </>
);

/* libraries */

const LibrariesTop = styled.div`
  flex: none;
  height: ${u(261)};
  padding: 0 ${u(24)};
  border-bottom: ${u(3)} solid #484848;
`;

const SearchRow = styled.div`
  display: flex;
  align-items: center;
  height: ${u(84)};
  padding: ${u(20)} ${u(7)} 0 ${u(2)};
  margin-bottom: ${u(25)};
  border-bottom: ${u(3)} solid #5e5e5e;
`;

const SearchInput = styled.input`
  flex: 1;
  padding-left: ${u(17)};
  font-size: ${u(31)};
  &::placeholder {
    color: #6d6d6d;
    font-style: italic;
    opacity: 1;
  }
`;

const ViewRow = styled.div`
  display: flex;
  align-items: center;
  height: ${u(94)};
  padding-top: ${u(7)};
`;

const ViewButton = styled.button`
  display: flex;
  align-items: center;
  gap: ${u(20)};
  margin-right: auto;
  color: #fff;
  font-size: ${u(31)};
`;

const CloudArea = styled.div`
  display: flex;
  flex: none;
  align-items: center;
  justify-content: center;
  height: ${u(168)};
  padding: ${u(14)} 0 0 ${u(3)};
  border-bottom: ${u(3)} solid #484848;
  background: #4d4d4d;
`;

const SizeRow = styled.div`
  display: flex;
  flex: none;
  align-items: center;
  justify-content: flex-end;
  gap: ${u(28)};
  height: ${u(69)};
  padding: ${u(2)} ${u(63)} 0 0;
  color: ${c.text};
  font-size: ${u(28)};
`;

const Libraries = () => (
  <>
    <Tabs tabs={[['Properties', 201], ['Libraries', 174], ['Layer Comps', 231]]} active="Libraries" />
    <LibrariesTop>
      <SearchRow>
        <Magnifier size={28} color="#fff" weight={6} />
        <SearchInput aria-label="Search Current Library" placeholder="Search Current Library" />
        <Chevron w={30} h={19} color="#b0b0b0" weight={5} />
      </SearchRow>
      <SelectBox $h={55} $tail={14} $faint>
        <NativeSelect $pad={20} aria-label="Library" />
        <Chevron w={24} h={16} color="#b0b0b0" weight={4} />
      </SelectBox>
      <ViewRow>
        <ViewButton>
          View by Type
          <Chevron w={24} h={16} color="#fff" weight={5} />
        </ViewButton>
        <Cluster $gap={18} $r={14}>
          <IconButton $w={60} $h={59} $active aria-label="Grid view">
            <Drawing w={38} h={38}>
              <path d="M0 0 h17 v17 h-17 z M21 0 h17 v17 h-17 z M0 21 h17 v17 h-17 z M21 21 h17 v17 h-17 z" fill={I} />
            </Drawing>
          </IconButton>
          <Drawing w={38} h={38}>
            <path d="M0 0 h9 v9 h-9 z M0 14 h9 v9 h-9 z M0 29 h9 v9 h-9 z M12 2 h26 v5 h-26 z M12 16 h26 v5 h-26 z M12 31 h26 v5 h-26 z" fill={I} />
          </Drawing>
        </Cluster>
      </ViewRow>
    </LibrariesTop>
    <CloudArea>
      <Drawing w={134} h={93}>
        <path d="M1 8 L27 33 M27 8 L1 33" stroke="#757575" strokeWidth="3" />
        <path d="M14 46 C13 74 30 91 51 91 H88 A45 45 0 0 0 88 2 C74 2 64 8 57 15 C48 14 42 15 36 18" stroke="#757575" strokeWidth="3" />
        <path d="M68 22 C74 16 81 14 88 14 A32 32 0 0 1 88 78 C76 78 70 73 66 68 L49 51" stroke="#757575" strokeWidth="5" />
        <path d="M82 48 L70 35 C64 29 58 28 51 28 A25 25 0 0 0 51 78 H62" stroke="#757575" strokeWidth="5" />
      </Drawing>
    </CloudArea>
    <SizeRow>
      -- KB
      <Drawing w={57} h={42}>
        <path d="M10 38 C-2 38 -2 22 8 21 C7 12 16 9 20 12 C22 0 40 0 42 12 V38 Z" fill="#a4a4a4" />
        <circle cx="45" cy="29" r="13" fill={I} stroke={c.panel} strokeWidth="3" />
        <path d="M39 23 L51 35 M51 23 L39 35" stroke={c.line} strokeWidth="3" />
      </Drawing>
      <Trash />
    </SizeRow>
  </>
);

/* layers */

const LayerRow = styled.div<{ $h: number; $ruled?: boolean }>`
  display: flex;
  flex: none;
  align-items: center;
  height: ${p => toPx(p.$h, p)};
  padding-left: ${u(11)};
  border-bottom: ${p => (p.$ruled ? css`${u(3)} solid ${c.line}` : '0')};
`;

const FilterRow = styled(LayerRow)`
  align-items: flex-start;
  gap: ${u(5)};
  padding-top: ${u(28)};
`;

const Toggle = styled.button`
  display: flex;
  justify-content: center;
  width: ${u(28)};
  height: ${u(53)};
  margin-left: ${u(3)};
  border: ${u(3)} solid ${c.edge};
  border-radius: ${u(14)};
  background: ${c.field};

  &::before {
    content: '';
    flex: none;
    width: ${u(25)};
    height: ${u(25)};
    margin: ${u(-3)} ${u(-2)} 0;
    align-self: flex-start;
    border-radius: 50%;
    background: ${c.icon};
  }
`;

const RightLabel = styled.label<{ $w: number }>`
  width: ${p => toPx(p.$w, p)};
  padding-right: ${u(13)};
  color: ${c.label};
  font-size: ${u(28)};
  text-align: right;
`;

const LockGroup = styled.div`
  display: flex;
  align-items: center;
  gap: ${u(27)};
  width: ${u(420)};
  padding-left: ${u(8)};
  color: ${c.label};
  font-size: ${u(28)};
`;

const LayerList = styled.div`
  flex: 1;
  min-height: 0;
  border-bottom: ${u(3)} solid ${c.line};
  background: ${c.strip};
`;

const LayerItem = styled.div`
  display: flex;
  height: ${u(269)};
  margin-right: ${u(48)};
  border-bottom: ${u(3)} solid #404040;
`;

const EyeCell = styled.button`
  display: flex;
  align-items: center;
  justify-content: center;
  width: ${u(91)};
  border-right: ${u(3)} solid ${c.strip};
  background: ${c.panel};
`;

const LayerBody = styled.div`
  display: flex;
  flex: 1;
  align-items: center;
  gap: ${u(23)};
  padding-left: ${u(5)};
  background: #6a6a6a;
  color: ${c.text};
  font-size: ${u(28)};
`;

const Footer = styled.div`
  display: flex;
  flex: none;
  align-items: center;
  justify-content: flex-end;
  height: ${u(72)};
  padding: 0 ${u(60)} ${u(2)} 0;
`;

const FooterCell = styled.button`
  position: relative;
  display: flex;
  align-items: center;
  justify-content: center;
  width: ${u(81)};
  height: ${u(48)};
`;

const FxMark = styled.span`
  color: ${c.icon};
  font-size: ${u(40)};
  font-style: italic;
  line-height: ${u(48)};
`;

const Caret = styled.span`
  position: absolute;
  right: ${u(14)};
  bottom: ${u(-1)};
  border: solid transparent;
  border-width: ${u(6)} ${u(6)} 0;
  border-top-color: #fff;
`;

const Layers = ({ uid }: { uid: string }) => (
  <>
    <Tabs tabs={[['Layers', 144]]} active="Layers" />
    <FilterRow $h={96} $ruled>
      <Pick label="Filter kind" value="Name" w={261} pad={61} lens />
      <TextBox $w={383} aria-label="Filter by name" />
      <Toggle aria-label="Toggle filter" />
    </FilterRow>
    <LayerRow $h={84} $ruled>
      <Pick label="Blend mode" value="Normal" w={389} />
      <RightLabel $w={140} htmlFor={`${uid}-layer-opacity`}>Opacity:</RightLabel>
      <Combo id={`${uid}-layer-opacity`} value="100%" />
    </LayerRow>
    <LayerRow $h={88}>
      <LockGroup>
        Lock:
        <Drawing w={34} h={34}>
          <path d="M1 1 H33 V33 H1 Z" stroke={I} strokeWidth="3" />
          <path d="M2 2 h8 v8 h-8 z M18 2 h8 v8 h-8 z M10 10 h8 v8 h-8 z M26 10 h7 v8 h-7 z M2 18 h8 v8 h-8 z M18 18 h8 v8 h-8 z M10 26 h8 v7 h-8 z M26 26 h7 v7 h-7 z" fill={I} />
        </Drawing>
        <Drawing w={42} h={42} vw={56} vh={56}>
          <BrushShape />
        </Drawing>
        <Drawing w={40} h={40} vw={56} vh={56}>
          {tools.move}
        </Drawing>
        <Drawing w={42} h={36}>
          <path d="M7 7 H27 L36 15 V29 H7 Z" stroke={I} strokeWidth="3" />
          <path d="M26 6 V16 H36 Z" fill={I} />
          <path d="M0 7 H3 M39 7 H42 M0 29 H3 M39 29 H42 M7 0 V3 M36 0 V3 M7 33 V36 M36 33 V36" stroke={I} strokeWidth="3" />
        </Drawing>
        <Drawing w={32} h={38}>
          <path d="M7 16 V9 C7 -1 25 -1 25 9 V16" stroke={I} strokeWidth="3" />
          <rect x="1" y="14" width="30" height="23" rx="2" fill={I} />
          <circle cx="16" cy="25" r="4" fill={c.panel} />
        </Drawing>
      </LockGroup>
      <RightLabel $w={109} htmlFor={`${uid}-layer-fill`}>Fill:</RightLabel>
      <Combo id={`${uid}-layer-fill`} value="100%" />
    </LayerRow>
    <LayerList>
      <LayerItem>
        <EyeCell aria-label="Layer visibility">
          <Drawing w={38} h={26}>
            <path d="M0 13 C9 -3 29 -3 38 13 C29 29 9 29 0 13 Z" fill={I} />
            <circle cx="19" cy="13" r="8" fill={c.panel} />
            <circle cx="19" cy="13" r="3" fill={I} />
          </Drawing>
        </EyeCell>
        <LayerBody>
          <Drawing w={252} h={186}>
            <path d="M85 1.5 H1.5 V64 M170 1.5 H250.5 V64 M1.5 127 V184.5 H85 M250.5 127 V184.5 H170" stroke="#fff" strokeWidth="3" />
            <path d="M7.5 7.5 H244.5 V178.5 H7.5 Z" fill={c.green} stroke="#333" strokeWidth="3" />
          </Drawing>
          Layer 1
        </LayerBody>
      </LayerItem>
    </LayerList>
    <Footer>
      <FooterCell aria-label="Link layers">
        <Drawing w={42} h={24}>
          <path d="M17 6 C11 0 2 3 2 12 C2 21 11 24 17 18 M25 6 C31 0 40 3 40 12 C40 21 31 24 25 18 M12 12 H30" stroke="#8c8c8c" strokeWidth="4" />
        </Drawing>
      </FooterCell>
      <FooterCell aria-label="Layer style">
        <FxMark>fx</FxMark>
        <Caret />
      </FooterCell>
      <FooterCell aria-label="Layer mask">
        <Drawing w={38} h={30}>
          <rect width="38" height="30" rx="2" fill={I} />
          <circle cx="19" cy="15" r="9" fill={c.panel} />
        </Drawing>
      </FooterCell>
      <FooterCell aria-label="Adjustment layer">
        <Drawing w={32} h={32}>
          <circle cx="16" cy="16" r="14" stroke={I} strokeWidth="3" />
          <path d="M26 6 A14 14 0 0 0 6 26 Z" fill={I} />
        </Drawing>
        <Caret />
      </FooterCell>
      <FooterCell aria-label="Group">
        <Drawing w={38} h={32}>
          <path d="M1 2 H17 M0 7 H38 V32 H0 Z" fill={I} stroke={I} strokeWidth="2" />
        </Drawing>
      </FooterCell>
      <FooterCell aria-label="New layer">
        <Drawing w={34} h={34}>
          <path d="M2 2 H32 V32 H2 Z M17 9 V25 M9 17 H25" stroke={I} strokeWidth="3" />
        </Drawing>
      </FooterCell>
      <FooterCell aria-label="Delete layer">
        <Trash />
      </FooterCell>
    </Footer>
  </>
);

const RightDock = ({ uid }: { uid: string }) => (
  <Dock>
    <DockHeader>
      <HeadGap>
        <DoubleChevron left />
      </HeadGap>
      <DoubleChevron />
    </DockHeader>
    <DockBody>
      <IconStrip>
        <StripSection>
          <Grip />
          <IconButton $w={86} $h={71} aria-label="History">
            <Drawing w={46} h={52}>
              <path d="M2 2 H14 V14 H2 Z M2 20 H14 V32 H2 Z" stroke={I} strokeWidth="3" />
              <path d="M0 37 H16 V51 H0 Z" fill={I} />
              <path d="M24 4 H42 L38 9 C50 20 46 38 28 46 C38 34 38 24 33 15 L28 20 Z" fill={I} />
            </Drawing>
          </IconButton>
          <IconButton $w={86} $h={71} $active aria-label="Color">
            <Drawing w={56} h={40}>
              <path d="M18 10 C16 2 28 0 36 1 C48 3 56 10 55 20 C54 32 42 40 28 39 C12 38 0 28 1 18 C3 8 14 14 18 10 Z" fill={I} />
              <g fill={c.line}>
                <circle cx="12" cy="23" r="5" />
                <circle cx="25" cy="30" r="5" />
                <circle cx="39" cy="28" r="5" />
                <circle cx="47" cy="20" r="4" />
                <circle cx="37" cy="10" r="4" />
              </g>
            </Drawing>
          </IconButton>
          <IconButton $w={86} $h={71} aria-label="Swatches">
            <Drawing w={48} h={40}>
              <path d="M2 2 H46 V38 H2 Z" fill="#484848" />
              <path d="M2 2 H17 V14 H2 Z" fill="#a8a8a8" />
              <path d="M17 2 H32 V14 H17 Z M2 14 H17 V26 H2 Z" fill="#6c6c6c" />
              <path d="M2 2 H46 V38 H2 Z M17 2 V38 M32 2 V38 M2 14 H46 M2 26 H46" stroke={I} strokeWidth="3" />
            </Drawing>
          </IconButton>
        </StripSection>
      </IconStrip>
      <Ridge />
      <Panels>
        <Paragraph />
        <PanelBreak />
        <Libraries />
        <PanelBreak />
        <Layers uid={uid} />
      </Panels>
    </DockBody>
  </Dock>
);

/* ---------- taskbar ---------- */

const Bar = styled.footer`
  display: flex;
  flex: none;
  height: ${u(120)};
  background: linear-gradient(90deg, #3e0d0a, #390a09 30%, #310609 60%, #350709);
  color: #fff;
`;

const AppCell = styled.button<{ $active?: boolean }>`
  display: flex;
  flex: none;
  align-items: center;
  justify-content: center;
  width: ${u(147)};
  background: ${p => (p.$active ? '#910e18' : 'none')};
`;

const Weather = styled.div`
  display: flex;
  flex: 1;
  align-items: center;
  justify-content: flex-end;
  padding-right: ${u(36)};
  font-size: ${u(34)};
`;

const WeatherMark = styled.div`
  width: ${u(460)};
`;

const TrayCell = styled.div<{ $w: number }>`
  display: flex;
  flex: none;
  align-items: center;
  justify-content: center;
  width: ${p => toPx(p.$w, p)};
`;

const Clock = styled.div`
  flex: none;
  width: ${u(198)};
  padding-top: ${u(5)};
  font-size: ${u(34)};
  line-height: ${u(57)};
  text-align: center;
`;

const NoticeCell = styled(TrayCell)`
  position: relative;
  border-right: ${u(3)} solid #8c6c70;
  margin-right: ${u(11)};
`;

const Badge = styled.span`
  position: absolute;
  right: ${u(33)};
  bottom: ${u(14)};
  display: flex;
  align-items: center;
  justify-content: center;
  width: ${u(60)};
  height: ${u(50)};
  border: ${u(2)} solid #d9a0a4;
  border-radius: 50%;
  background: #7e0710;
  font-size: ${u(31)};
  font-weight: 600;
`;

const appIcons: React.ReactNode[] = [
  <path d="M0 11 L20 8 V27 H0 Z M23 8 L48 4 V27 H23 Z M0 30 H20 V49 L0 46 Z M23 30 H48 V53 L23 49 Z" fill="#fff" />,
  <path d="M18 38 L4 52 M32 2 A17 17 0 1 1 31.9 2 Z" stroke="#fff" strokeWidth="4" />,
  <circle cx="28" cy="28" r="24" stroke="#fff" strokeWidth="6" />,
  <path d="M5 0 V8 H40 V0 M5 14 H40 V40 H5 Z M48 0 V50" stroke="#fff" strokeWidth="4" />,
  <>
    <circle cx="28" cy="26" r="34" fill="#1c86d8" />
    <path d="M0 9 C20 -16 50 -10 58 12 C62 26 54 34 42 34 C46 20 28 6 0 9 Z" fill="#36c8c0" />
    <path d="M44 -4 C62 8 64 30 46 34 Z" fill="#55d080" />
  </>,
  <>
    <path d="M-3 4 H24 L28 12 H-3 Z" fill="#d99a00" />
    <path d="M-3 10 H60 V50 H-3 Z" fill="#ffd766" />
  </>,
  <>
    <path d="M4 -4 H50 V50 H4 Z" fill="#0a64b8" />
    <path d="M26 4 H50 V26 H26 Z" fill="#29b0f4" />
  </>,
  <circle cx="28" cy="26" r="30" fill="#d94a3e" />,
  <>
    <circle cx="28" cy="26" r="28" fill="#fff" />
    <path d="M28 2 L36 14 H20 Z" fill="#2f9e58" />
  </>,
  <>
    <rect x="-4" y="-8" width="66" height="64" rx="12" fill="#2fa8e0" />
    <rect x="1" y="0" width="56" height="52" rx="6" fill="#04202b" />
  </>,
  <>
    <path d="M28 -4 L42 8 L36 40 L24 12 Z" fill="#c99a6a" />
    <path d="M4 30 C10 6 28 10 24 40 Z" fill="#d8d8e6" />
  </>,
];

const trayIcons: React.ReactNode[] = [
  <>
    <path d="M2 11 H50 V42 H2 Z" fill="#e8bf7c" />
    <path d="M2 12 L22 28 Q26 31 30 28 L50 12" stroke="#fff" strokeWidth="2" />
  </>,
  <>
    <path d="M18 6 H50 V40 H18 Z" fill="#28a8ea" />
    <path d="M34 6 H50 V23 H34 Z" fill="#50d9ff" />
    <path d="M18 23 H50 V46 H18 Z" fill="#1490df" />
    <path d="M2 14 H29 V41 H2 Z" fill="#0364b8" />
    <ellipse cx="15" cy="27" rx="6" ry="7" stroke="#fff" strokeWidth="4" />
  </>,
  <>
    <path d="M26 2 C33 7 41 8 46 8 C47 30 42 42 26 50 C10 42 5 30 6 8 C11 8 19 7 26 2 Z" fill="#fff" stroke="#111" strokeWidth="2" />
    <path d="M26 3 V49 M6 25 H46" stroke="#111" strokeWidth="3" />
    <path d="M36 23 L50 51 H22 Z" fill="#fbb913" />
    <path d="M36 33 V43 M36 46 V49" stroke="#111" strokeWidth="3" />
  </>,
  <>
    <path d="M12 42 C-1 42 0 24 11 24 C14 8 34 6 38 21 C54 21 52 42 42 42 Z" fill="#e9dddd" />
    <path d="M11 24 C14 8 34 6 38 21 L20 31 Z" fill="#c9b6b7" />
  </>,
  <path d="M6 8 V14 M16 8 V14 M3 14 H19 V22 C19 28 3 28 3 22 Z M11 27 V42 M24 15 H47 V41 H17 V30 M50 23 V33" stroke="#fff" strokeWidth="3" />,
  <>
    <path d="M9 46 C10 26 24 12 44 10 M18 46 C20 32 29 23 44 20 M27 46 C29 38 35 32 44 30" stroke="#fff" strokeWidth="3" />
    <circle cx="40" cy="42" r="5" fill="#fff" />
  </>,
  <>
    <path d="M3 20 H10 L21 10 V43 L10 33 H3 Z M27 19 C31 23 31 30 27 34 M33 13 C40 21 40 32 33 40" stroke="#fff" strokeWidth="3" />
    <path d="M40 7 C50 18 50 34 40 46" stroke="#8f6d6f" strokeWidth="3" />
  </>,
];

const Taskbar = ({ time, date, weather, count }: DesktopState) => (
  <Bar>
    {appIcons.map((icon, i) => (
      <AppCell key={i} $active={i === 9} aria-label={`Task ${i + 1}`}>
        <Drawing w={56} h={56}>
          {icon}
        </Drawing>
      </AppCell>
    ))}
    <Weather>
      {weather ?? (
        <WeatherMark>
          <Drawing w={66} h={56}>
            <circle cx="25" cy="12" r="16" fill="#f4c020" />
            <circle cx="54" cy="6" r="8" fill="#d0162c" />
          </Drawing>
        </WeatherMark>
      )}
    </Weather>
    {trayIcons.map((icon, i) => (
      <TrayCell key={i} $w={96}>
        <Drawing w={52} h={52}>
          {icon}
        </Drawing>
      </TrayCell>
    ))}
    <Clock>
      {time}
      {date && <div>{date}</div>}
    </Clock>
    <NoticeCell $w={150}>
      <Drawing w={72} h={48}>
        <path d="M0 0 H48 V38 H20 L12 48 V38 H0 Z" fill="#fff" />
        <path d="M9 10 H39 M9 19 H39 M9 28 H28" stroke="#350709" strokeWidth="3" />
      </Drawing>
      {count && <Badge>{count}</Badge>}
    </NoticeCell>
  </Bar>
);

/* ---------- desktops ---------- */

type DesktopState = {
  uid: string;
  openMenu?: string;
  fore: string;
  safe: string;
  ring: [string, string];
  rulerTo: number;
  cursor?: boolean;
  status?: boolean;
  time: string;
  date?: string;
  weather?: string;
  count?: number;
};

const DesktopFrame = styled.div`
  display: flex;
  flex-direction: column;
  width: ${p => p.theme.scale * 100}vw;
  height: ${p => p.theme.scale * 100}vh;
  background: ${c.panel};
`;

const Workspace = styled.div`
  display: flex;
  flex: 1;
  min-height: 0;
`;

const Desktop = (p: DesktopState) => (
  <DesktopFrame>
    <Title openMenu={p.openMenu} />
    <Options uid={p.uid} />
    <Workspace>
      <Toolbar />
      <Ridge />
      <DocumentArea {...p} />
      <Ridge />
      <RightDock uid={p.uid} />
    </Workspace>
    <Taskbar {...p} />
  </DesktopFrame>
);

const Screen = styled.div`
  position: relative;
  width: 100%;
  height: 100vh;
  overflow: hidden;
`;

const Pasted = styled.div`
  position: absolute;
  left: 73px;
  top: 703px;
`;

const Arrows = styled.svg`
  position: absolute;
  left: 150px;
  top: 816px;
  width: 480px;
  height: 884px;
`;

const outer: DesktopState = {
  uid: 'back',
  fore: '#75ff00',
  safe: '#74b84e',
  ring: ['99%', '1%'],
  rulerTo: 4,
  time: '8:49 AM',
  date: '1/12/2022',
  weather: 'Cloudy',
  count: 20,
};

const inner: DesktopState = {
  uid: 'front',
  openMenu: 'File',
  fore: c.green,
  safe: '#58ae58',
  ring: ['95%', '32%'],
  rulerTo: 16,
  cursor: true,
  status: true,
  time: '8:50 AM',
};

export default function App() {
  return (
    <>
      <Global />
      <Screen>
        <ThemeProvider theme={{ scale: 1 }}>
          <Desktop {...outer} />
        </ThemeProvider>
        <Pasted>
          <ThemeProvider theme={{ scale: 0.7 }}>
            <Desktop {...inner} />
          </ThemeProvider>
        </Pasted>
        <Arrows viewBox="150 816 480 884" fill="#fff" stroke="#000" strokeWidth="5" aria-hidden="true">
          <path d="M372 825 L481 1018 H427 V1214 H318 V1018 H264 Z" />
          <path d="M154 1570 L388 1446 V1508 H624 V1630 H388 V1692 Z" />
        </Arrows>
      </Screen>
    </>
  );
}
